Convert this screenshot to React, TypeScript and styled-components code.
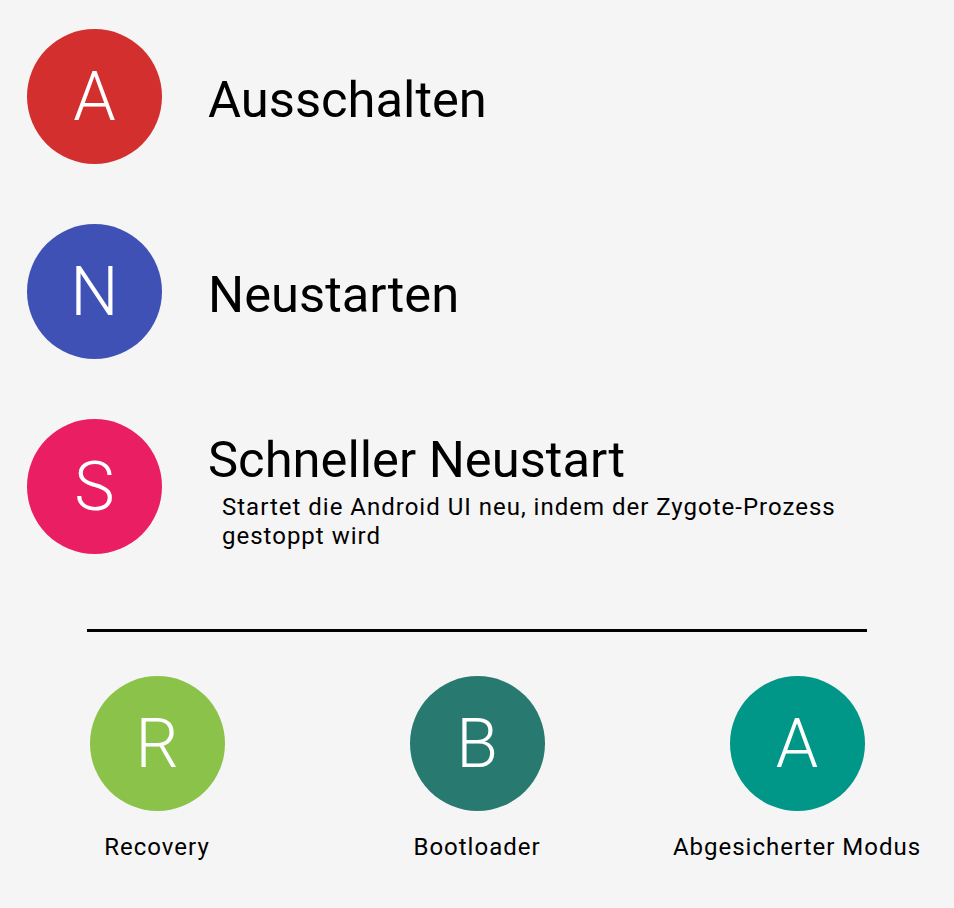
import React from "react";
import styled, { createGlobalStyle } from "styled-components";

const Global = createGlobalStyle`
  html, body {
    margin: 0;
    padding: 0;
    background: #f5f5f5;
  }
  body {
    font-family: Roboto, "Noto Sans", "Liberation Sans", sans-serif;
    color: #000;
  }
`;

const Page = styled.div`
  width: 954px;
  min-height: 908px;
  background: #f5f5f5;
  display: flex;
  flex-direction: column;
  padding-top: 29px;
  box-sizing: border-box;
`;

const List = styled.div`
  display: flex;
  flex-direction: column;
  gap: 60px;
  padding-left: 27px;
`;

const Row = styled.div`
  display: flex;
  align-items: center;
  gap: 46px;
`;

const Avatar = styled.div<{ $bg: string }>`
  width: 135px;
  height: 135px;
  flex: 0 0 135px;
  border-radius: 50%;
  background: ${(p) => p.$bg};
  color: #fff;
  display: flex;
  align-items: center;
  justify-content: center;
  font-family: Roboto, sans-serif;
  font-weight: 300;
  font-size: 68px;
  line-height: 1;
`;

const TextBlock = styled.div`
  display: flex;
  flex-direction: column;
  padding-top: 7px;
`;

const Title = styled.div`
  font-size: 50.7px;
  line-height: 60px;
  font-weight: 400;
`;

const Subtitle = styled.div`
  font-size: 24px;
  line-height: 29px;
  letter-spacing: 1px;
  margin: 3px 0 0 14px;
  width: 660px;
`;

const Divider = styled.hr`
  width: 780px;
  height: 3px;
  border: 0;
  background: #000;
  margin: 75px auto 0;
`;

const Shortcuts = styled.div`
  display: grid;
  grid-template-columns: repeat(3, 320px);
  justify-content: center;
  margin-top: 44px;
`;

const Shortcut = styled.div`
  display: flex;
  flex-direction: column;
  align-items: center;
  gap: 22px;
`;

const Label = styled.div`
  font-size: 24px;
  line-height: 28px;
  letter-spacing: 1px;
  white-space: nowrap;
`;

const rows = [
  { letter: "A", bg: "#d32f2f", title: "Ausschalten" },
  { letter: "N", bg: "#3f51b5", title: "Neustarten" },
  {
    letter: "S",
    bg: "#e91e63",
    title: "Schneller Neustart",
    sub: "Startet die Android UI neu, indem der Zygote-Prozess gestoppt wird",
  },
];

const shortcuts = [
  { letter: "R", bg: "#8bc34a", label: "Recovery" },
  { letter: "B", bg: "#287a70", label: "Bootloader" },
  { letter: "A", bg: "#009688", label: "Abgesicherter Modus" },
];

export default function App() {
  return (
    <Page>
      <Global />
      <List>
        {rows.map((r) => (
          <Row key={r.title}>
            <Avatar $bg={r.bg}>{r.letter}</Avatar>
            <TextBlock>
              <Title>{r.title}</Title>
              {r.sub && <Subtitle>{r.sub}</Subtitle>}
            </TextBlock>
          </Row>
        ))}
      </List>
      <Divider />
      <Shortcuts>
        {shortcuts.map((s) => (
          <Shortcut key={s.label}>
            <Avatar $bg={s.bg}>{s.letter}</Avatar>
            <Label>{s.label}</Label>
          </Shortcut>
        ))}
      </Shortcuts>
    </Page>
  );
}
